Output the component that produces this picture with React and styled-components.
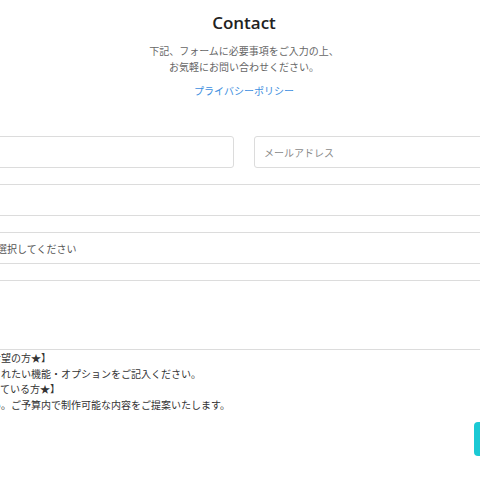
import React from "react";
import styled, { createGlobalStyle } from "styled-components";

const GlobalStyle = createGlobalStyle`
  html, body {
    margin: 0;
    padding: 0;
    background: #ffffff;
  }
  body {
    font-family: "Noto Sans CJK JP", "Noto Sans", sans-serif;
    color: #333;
  }
`;

const Page = styled.div`
  width: 480px;
  height: 480px;
  overflow: hidden;
  background: #fff;
`;

const Container = styled.div`
  width: 666px;
  margin-left: -89px;
  padding-top: 13px;
`;

const Title = styled.h2`
  margin: 0;
  font-family: "Open Sans", "Noto Sans", sans-serif;
  font-size: 17px;
  font-weight: 600;
  line-height: 20px;
  color: #222;
  text-align: center;
`;

const Lead = styled.p`
  margin: 10px 0 0;
  font-size: 10px;
  line-height: 16px;
  color: #666;
  text-align: center;
`;

const PolicyLink = styled.a`
  display: block;
  margin-top: 8px;
  font-size: 10px;
  line-height: 16px;
  color: #3d8ee0;
  text-align: center;
  text-decoration: none;
`;

const Form = styled.form`
  margin-top: 37px;
`;

const Fields = styled.div`
  display: flex;
  flex-direction: column;
  gap: 16px;
`;

const Row = styled.div`
  display: grid;
  grid-template-columns: 1fr 1fr;
  gap: 20px;
`;

const fieldBase = `
  box-sizing: border-box;
  width: 100%;
  margin: 0;
  border: 1px solid #dcdcdc;
  border-radius: 3px;
  background: #fff;
  font-family: "Noto Sans CJK JP", "Noto Sans", sans-serif;
  font-size: 10px;
  color: #333;
  outline: none;
`;

const Input = styled.input`
  ${fieldBase}
  display: block;
  height: 32px;
  padding: 0 9px;

  &::placeholder {
    color: #8a8a8a;
  }
`;

const Select = styled.select`
  ${fieldBase}
  display: block;
  height: 32px;
  padding: 0 5px;
  appearance: none;
  color: #555;
`;

const TextArea = styled.textarea`
  ${fieldBase}
  display: block;
  height: 70px;
  padding: 8px 9px;
  resize: none;
`;

const Notes = styled.p`
  margin: 0;
  font-size: 10px;
  line-height: 15.5px;
  color: #333;
`;

const Actions = styled.div`
  display: flex;
  justify-content: flex-end;
  margin-top: 10px;
`;

const SubmitButton = styled.button`
  width: 103px;
  height: 34px;
  border: none;
  border-radius: 4px;
  background: #1bc9d4;
  color: #fff;
  font-family: "Noto Sans CJK JP", "Noto Sans", sans-serif;
  font-size: 11px;
  font-weight: 700;
  cursor: pointer;
`;

export default function App() {
  return (
    <Page>
      <GlobalStyle />
      <Container>
        <Title>Contact</Title>
        <Lead>
          下記、フォームに必要事項をご入力の上、
          <br />
          お気軽にお問い合わせください。
        </Lead>
        <PolicyLink href="#privacy">プライバシーポリシー</PolicyLink>

        <Form onSubmit={(e) => e.preventDefault()}>
          <Fields>
            <Row>
              <Input type="text" placeholder="お名前" />
              <Input type="email" placeholder="メールアドレス" />
            </Row>
            <Input type="text" placeholder="会社名" />
            <Select defaultValue="">
              <option value="" disabled>
                ご希望のプランを選択してください
              </option>
              <option value="web">Webサイト制作</option>
              <option value="app">アプリ開発</option>
            </Select>
            <TextArea />
          </Fields>
          <Notes>
            【★機能追加をご希望の方★】
            <br />
            制作サイトに追加されたい機能・オプションをご記入ください。
            <br />
            【★ご予算が決まっている方★】
            <br />
            予算をご記入下さい。ご予算内で制作可能な内容をご提案いたします。
          </Notes>
          <Actions>
            <SubmitButton type="submit">送信する</SubmitButton>
          </Actions>
        </Form>
      </Container>
    </Page>
  );
}
